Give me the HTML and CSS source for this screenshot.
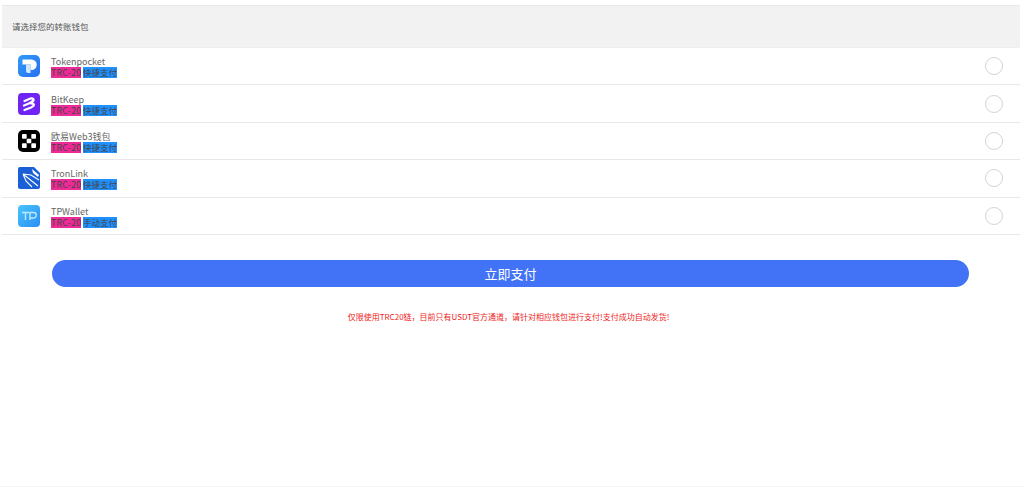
FILE: index.html
```html
<!DOCTYPE html>
<html lang="zh-CN">
<head>
  <meta charset="UTF-8">
  <meta name="viewport" content="width=device-width, initial-scale=1.0">
  <title>选择钱包</title>
  <link rel="stylesheet" href="styles.css">
</head>
<body>

  <div class="container">
    <div class="header">请选择您的转账钱包</div>

    <div class="wallets">
      <div class="wallet">
        <svg class="icon" viewBox="0 0 22 22">
          <defs>
            <linearGradient id="tp-blue" x1="0" y1="0" x2="1" y2="1">
              <stop offset="0" stop-color="#2f9bf8"/>
              <stop offset="1" stop-color="#2a6ff0"/>
            </linearGradient>
          </defs>
          <rect width="22" height="22" rx="5" fill="url(#tp-blue)"/>
          <path d="M4.500 4.500h9a5 5 0 0 1 0 10.500H12.500V9.500H4.500z" fill="#fff"/>
          <path d="M8 9.500h4.500v8.500H10a2 2 0 0 1-2-2z" fill="#cfe7ff"/>
        </svg>
        <div class="info">
          <div class="name">Tokenpocket</div>
          <div class="tags"><span class="tag-chain">TRC-20</span><span class="tag-type">快捷支付</span></div>
        </div>
        <span class="radio"></span>
      </div>

      <div class="wallet">
        <svg class="icon" viewBox="0 0 22 22">
          <rect width="22" height="22" rx="4" fill="#7024f4"/>
          <path d="M6.500 8l6-2.500q3.500-.5 3 2l-3.500 2.500M6 12.500l8.500-3.500M6.500 17l6.500-2.500q4-2 2.500-3.500l-2.500-.5" fill="none" stroke="#fff" stroke-width="2.200" stroke-linecap="round"/>
        </svg>
        <div class="info">
          <div class="name">BitKeep</div>
          <div class="tags"><span class="tag-chain">TRC-20</span><span class="tag-type">快捷支付</span></div>
        </div>
        <span class="radio"></span>
      </div>

      <div class="wallet">
        <svg class="icon" viewBox="0 0 22 22">
          <rect width="22" height="22" rx="5" fill="#000"/>
          <g fill="#fff">
            <rect x="4" y="4" width="4.700" height="4.700" rx=".8"/>
            <rect x="13.300" y="4" width="4.700" height="4.700" rx=".8"/>
            <rect x="8.700" y="8.700" width="4.600" height="4.600" rx=".8"/>
            <rect x="4" y="13.300" width="4.700" height="4.700" rx=".8"/>
            <rect x="13.300" y="13.300" width="4.700" height="4.700" rx=".8"/>
          </g>
        </svg>
        <div class="info">
          <div class="name">欧易Web3钱包</div>
          <div class="tags"><span class="tag-chain">TRC-20</span><span class="tag-type">快捷支付</span></div>
        </div>
        <span class="radio"></span>
      </div>

      <div class="wallet">
        <svg class="icon" viewBox="0 0 22 22">
          <path d="M2 0h14l6 6v14a2 2 0 0 1-2 2H2a2 2 0 0 1-2-2V2a2 2 0 0 1 2-2z" fill="#1a5fd6"/>
          <path d="M5 7l15 12M5 7l8 1 8 5M5 7l3 7 6 6" fill="none" stroke="#fff" stroke-width="1.100"/>
          <path d="M14 2l7 6-1 2-5-4z" fill="#fff"/>
        </svg>
        <div class="info">
          <div class="name">TronLink</div>
          <div class="tags"><span class="tag-chain">TRC-20</span><span class="tag-type">快捷支付</span></div>
        </div>
        <span class="radio"></span>
      </div>

      <div class="wallet">
        <svg class="icon" viewBox="0 0 22 22">
          <defs>
            <linearGradient id="tpw-blue" x1="0" y1="0" x2="1" y2="1">
              <stop offset="0" stop-color="#49c6fb"/>
              <stop offset="1" stop-color="#2a8cf5"/>
            </linearGradient>
          </defs>
          <rect width="22" height="22" rx="4" fill="url(#tpw-blue)"/>
          <path d="M4 7.500h7M7.500 7.500v7.500M12 15v-7.500h3.500a2.500 2.500 0 0 1 0 5.500h-3.500" fill="none" stroke="#bfe9ff" stroke-width="1.400"/>
        </svg>
        <div class="info">
          <div class="name">TPWallet</div>
          <div class="tags"><span class="tag-chain">TRC-20</span><span class="tag-type">手动支付</span></div>
        </div>
        <span class="radio"></span>
      </div>
    </div>

    <button class="pay">立即支付</button>
    <p class="notice">仅限使用TRC20链，目前只有USDT官方通道，请针对相应钱包进行支付!支付成功自动发货!</p>
  </div>

</body>
</html>
```

FILE: styles.css
```css
* {
  margin: 0;
  padding: 0;
  box-sizing: border-box;
}

html, body {
  height: 100%;
}

body {
  font-family: "Noto Sans CJK SC", "Noto Sans", sans-serif;
  background-color: #fff;
  overflow: hidden;
}

.container {
  height: 100%;
  padding: 5px 4px 0 2px;
  border-bottom: 1px solid #f4f4f4;
}

.header {
  height: 43px;
  padding-left: 10px;
  line-height: 41px;
  font-size: 8.500px;
  color: #555;
  background-color: #f2f2f2;
  border-top: 1px solid #e8e8e8;
  border-bottom: 1px solid #eee;
}

.wallet {
  display: flex;
  align-items: center;
  height: 37.400px;
  padding: 0 17px 0 16px;
  border-bottom: 1.500px solid #e8e8e8;
}

.icon {
  width: 22px;
  height: 22px;
  flex-shrink: 0;
  margin-right: 11px;
}

.info {
  flex: 1;
  padding-top: 3px;
}

.name {
  font-size: 9px;
  line-height: 9px;
  color: #666;
}

.tags {
  display: flex;
  gap: 2px;
  margin-top: 1px;
  font-size: 8.500px;
  line-height: 11px;
  color: #444;
  white-space: nowrap;
}

.tag-chain {
  width: 30px;
  background-color: #ee2a97;
  letter-spacing: 0.4px;
}

.tag-type {
  width: 34px;
  background-color: #1e90ff;
}

.radio {
  width: 18px;
  height: 18px;
  border: 1.500px solid #d4d4d4;
  border-radius: 50%;
}

.pay {
  display: block;
  width: 917px;
  height: 27px;
  margin: 25px 0 0 50px;
  border: none;
  border-radius: 14px;
  background-color: #4273f6;
  color: #fff;
  font-family: inherit;
  font-size: 13px;
}

.notice {
  margin-top: 25px;
  padding-right: 5px;
  text-align: center;
  font-size: 8px;
  line-height: 10px;
  color: #f01c1c;
}
```
